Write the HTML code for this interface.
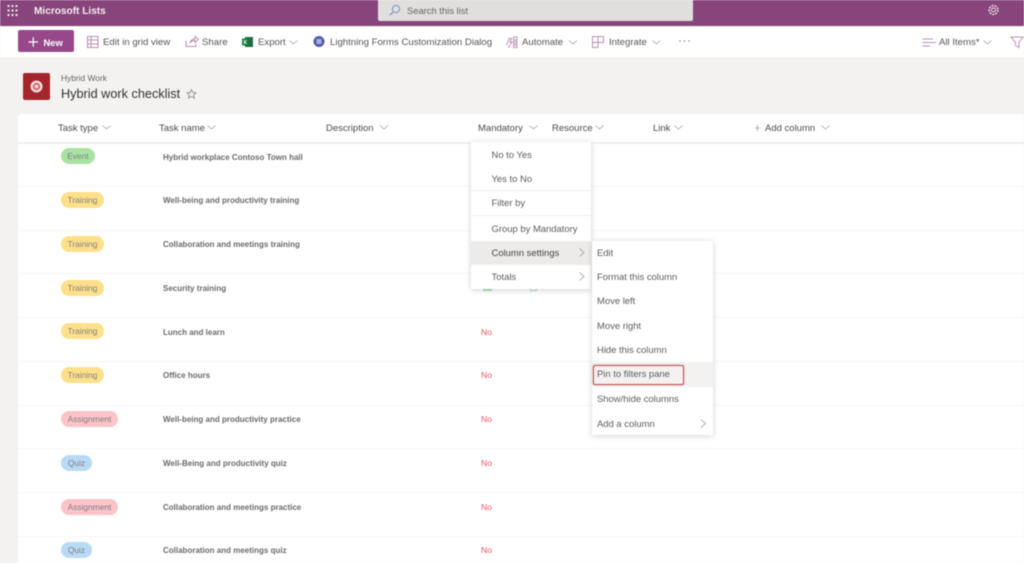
<!DOCTYPE html>
<html><head><meta charset="utf-8">
<style>
html,body{margin:0;padding:0;background:#f3f2f1}
#p{position:relative;width:1024px;height:563px;overflow:hidden;background:#f3f2f1;font-family:"Liberation Sans",sans-serif;color:#444;filter:blur(.4px)}
#p div,#p span.t,#p svg{position:absolute}
.t{position:absolute;white-space:nowrap;line-height:20px;height:20px;font-size:9.6px}
.c{font-size:9.6px;color:#555}
.h{font-size:9.5px;color:#4a4a4a}
.m{font-size:9.45px;color:#5c5c5c}
.n{font-size:8px;font-weight:bold;color:#6a6a6a}
.r{font-size:8.6px;color:#f0525f}
.pill{height:16px;border-radius:8px;line-height:16px;font-size:8.4px;color:#808080;text-align:center}
.sep{left:18px;width:1006px;height:1px;background:#f7f6f5}
.ms{left:471px;width:120px;height:1px;background:#f0efee}
svg{overflow:visible}
</style></head><body><div id="p">
<!-- top bar -->
<div style="left:0;top:0;width:1024px;height:26px;background:#88457b"></div>
<div style="left:378px;top:0;width:315px;height:21px;background:#e1dfdd;border-radius:0 0 2px 2px"></div>
<svg style="left:0;top:0" width="1024" height="26">
<g fill="#f0e4ee"><rect x="7.500" y="5" width="2" height="2"/><rect x="11.500" y="5" width="2" height="2"/><rect x="15.500" y="5" width="2" height="2"/><rect x="7.500" y="9.500" width="2" height="2"/><rect x="11.500" y="9.500" width="2" height="2"/><rect x="15.500" y="9.500" width="2" height="2"/><rect x="7.500" y="14" width="2" height="2"/><rect x="11.500" y="14" width="2" height="2"/><rect x="15.500" y="14" width="2" height="2"/></g>
<circle cx="396" cy="9" r="3.600" fill="none" stroke="#6b93c9" stroke-width="1"/><path d="M393.400 11.800L389.600 15.400" stroke="#6b93c9" stroke-width="1.100"/>
<circle cx="993.500" cy="10" r="2" fill="none" stroke="#eadfe8" stroke-width="1"/><circle cx="993.500" cy="10" r="4.400" fill="none" stroke="#eadfe8" stroke-width="1.600" stroke-dasharray="1.900 1.200"/>
</svg>
<span class="t" style="left:34px;top:2px;color:#fff;font-size:10.100px;font-weight:bold;opacity:.9">Microsoft Lists</span>
<span class="t" style="left:407px;top:1px;color:#666;font-size:9.400px">Search this list</span>
<!-- command bar -->
<div style="left:0;top:27px;width:1024px;height:30px;background:#fff"></div>
<div style="left:18px;top:30px;width:56px;height:22px;background:#97488a;border-radius:2px"></div>
<svg style="left:0;top:27px" width="1024" height="30" fill="none" stroke="#bb8fb3" stroke-width="1">
<path d="M28.500 15H38M33.200 10.200V19.800" stroke="#fff" stroke-width="1.200"/>
<path d="M87.500 9.500H98V20.500H87.500ZM87.500 13H98M87.500 17H98M91 9.500V20.500"/>
<path d="M186 13.500V19.500H196V17M190 16C190.500 13 192.500 12 195 12V9.500L198.500 12.500L195 15.500V13.500C193 13.500 191.500 14 190 16Z"/>
<rect x="245" y="10" width="8" height="10" fill="#1d6f42" stroke="none"/><rect x="242" y="11.500" width="6" height="7" fill="#107c41" stroke="none"/><path d="M243.500 13L246.500 17M246.500 13L243.500 17" stroke="#fff" stroke-width=".8"/>
<circle cx="319" cy="14.500" r="5.500" fill="#5558af" stroke="none"/><rect x="316.500" y="12" width="5" height="5" fill="#aab0e0" stroke="none"/>
<path d="M506.500 18L509 11.500H511.500L510 15H512L508 20.500M513.500 10h3.500v3h-3.500zM513.500 14.500h3.500v2h-3.500zM513.500 18h3.500v2.500h-3.500z"/>
<path d="M592.500 9.500H603.500V15.500H598V20.500H592.500ZM592.500 15.500H598M598 9.500V15.500"/>
<path d="M922.500 12H933M922.500 15.500H936M922.500 19H930"/>
<path d="M1011 10H1023L1019 15.500V20.500L1015.500 18.500V15.500Z"/>
<g stroke="#a0a0a0" stroke-width=".8"><path d="M289.500 13.500L293.500 17L297.500 13.500"/><path d="M569 13.500L573 17L577 13.500"/><path d="M652.500 13.500L656.500 17L660.500 13.500"/><path d="M983.500 13.500L987.500 17L991.500 13.500"/></g>
<g fill="#888" stroke="none"><circle cx="680" cy="14" r=".8"/><circle cx="684.500" cy="14" r=".8"/><circle cx="689" cy="14" r=".8"/></g>
</svg>
<span class="t" style="left:43.500px;top:33px;color:#fff;font-size:9.400px;font-weight:bold">New</span>
<span class="t c" style="left:103px;top:33px">Edit in grid view</span>
<span class="t c" style="left:202px;top:33px">Share</span>
<span class="t c" style="left:258px;top:33px">Export</span>
<span class="t c" style="left:330px;top:33px">Lightning Forms Customization Dialog</span>
<span class="t c" style="left:522px;top:33px">Automate</span>
<span class="t c" style="left:609px;top:33px">Integrate</span>
<span class="t c" style="left:939px;top:33px">All Items*</span>
<!-- title -->
<div style="left:23px;top:73px;width:27px;height:27px;background:#a4262c;border-radius:2px"></div>
<svg style="left:23px;top:73px" width="27" height="27"><circle cx="13.500" cy="13.500" r="6" fill="#f4dcdc"/><circle cx="13.500" cy="13.500" r="3.600" fill="#c9555a"/><circle cx="13.500" cy="13.500" r="2" fill="#f4dcdc"/></svg>
<span class="t" style="left:61px;top:68px;font-size:8.400px;color:#666">Hybrid Work</span>
<span class="t" style="left:61px;top:84px;font-size:12.700px;color:#333">Hybrid work checklist</span>
<svg style="left:186px;top:87.500px" width="12" height="12"><path d="M5.500 1.500L6.800 4.500L10 4.800L7.600 7L8.400 10.200L5.500 8.500L2.600 10.200L3.400 7L1 4.800L4.200 4.500Z" fill="none" stroke="#777" stroke-width=".7"/></svg>
<!-- list -->
<div style="left:18px;top:114px;width:1006px;height:449px;background:#fff;border-radius:3px 0 0 0"></div>
<div style="left:18px;top:142px;width:1006px;height:2px;background:#f0efee"></div>
<div class="sep" style="top:186px"></div><div class="sep" style="top:230px"></div><div class="sep" style="top:273px"></div><div class="sep" style="top:317px"></div><div class="sep" style="top:361px"></div><div class="sep" style="top:405px"></div><div class="sep" style="top:448px"></div><div class="sep" style="top:492px"></div><div class="sep" style="top:536px"></div>
<span class="t h" style="left:58px;top:119px">Task type</span>
<span class="t h" style="left:159px;top:119px">Task name</span>
<span class="t h" style="left:326px;top:119px">Description</span>
<span class="t h" style="left:478px;top:119px">Mandatory</span>
<span class="t h" style="left:552px;top:119px">Resource</span>
<span class="t h" style="left:653px;top:119px">Link</span>
<span class="t h" style="left:765px;top:119px">Add column</span>
<svg style="left:0;top:114px" width="1024" height="28" fill="none" stroke="#a0a0a0" stroke-width=".8">
<path d="M102.500 11.500L106.500 15L110.500 11.500M207.500 11.500L211.500 15L215.500 11.500M380 11.500L384 15L388 11.500M529.500 11.500L533.500 15L537.500 11.500M595.500 11.500L599.500 15L603.500 11.500M674.500 11.500L678.500 15L682.500 11.500M821.500 11.500L825.500 15L829.500 11.500"/>
<path d="M754.500 14H760.500M757.500 11V17"/>
</svg>
<!-- pills -->
<div class="pill" style="left:61px;top:148px;width:34px;background:#a8e3a3">Event</div>
<div class="pill" style="left:61px;top:192px;width:43px;background:#ffe08a">Training</div>
<div class="pill" style="left:61px;top:236px;width:43px;background:#ffe08a">Training</div>
<div class="pill" style="left:61px;top:280px;width:43px;background:#ffe08a">Training</div>
<div class="pill" style="left:61px;top:323px;width:43px;background:#ffe08a">Training</div>
<div class="pill" style="left:61px;top:367px;width:43px;background:#ffe08a">Training</div>
<div class="pill" style="left:61px;top:411px;width:57px;background:#fbc4c9">Assignment</div>
<div class="pill" style="left:61px;top:455px;width:31px;background:#b9daf5">Quiz</div>
<div class="pill" style="left:61px;top:499px;width:57px;background:#fbc4c9">Assignment</div>
<div class="pill" style="left:61px;top:542px;width:31px;background:#b9daf5">Quiz</div>
<!-- names -->
<span class="t n" style="left:163px;top:148px">Hybrid workplace Contoso Town hall</span>
<span class="t n" style="left:163px;top:191px">Well-being and productivity training</span>
<span class="t n" style="left:163px;top:235px">Collaboration and meetings training</span>
<span class="t n" style="left:163px;top:279px">Security training</span>
<span class="t n" style="left:163px;top:323px">Lunch and learn</span>
<span class="t n" style="left:163px;top:366px">Office hours</span>
<span class="t n" style="left:163px;top:410px">Well-being and productivity practice</span>
<span class="t n" style="left:163px;top:454px">Well-Being and productivity quiz</span>
<span class="t n" style="left:163px;top:498px">Collaboration and meetings practice</span>
<span class="t n" style="left:163px;top:541px">Collaboration and meetings quiz</span>
<!-- No -->
<span class="t r" style="left:481px;top:322px">No</span>
<span class="t r" style="left:481px;top:365px">No</span>
<span class="t r" style="left:481px;top:409px">No</span>
<span class="t r" style="left:481px;top:453px">No</span>
<span class="t r" style="left:481px;top:497px">No</span>
<span class="t r" style="left:481px;top:540px">No</span>
<div style="left:483px;top:289px;width:9px;height:1.500px;background:#b5dcb5"></div>
<div style="left:530px;top:288px;width:5px;height:2px;border:1px solid #b5dcb5;border-top:0"></div>
<!-- menu 1 -->
<div style="left:471px;top:142px;width:120px;height:147px;background:#fff;box-shadow:0 1px 6px rgba(0,0,0,.18)"></div>
<div class="ms" style="top:190px"></div><div class="ms" style="top:215px"></div>
<div style="left:471px;top:241px;width:120px;height:24px;background:#edebe9"></div>
<span class="t m" style="left:491.500px;top:146px">No to Yes</span>
<span class="t m" style="left:491.500px;top:170px">Yes to No</span>
<span class="t m" style="left:491.500px;top:194px">Filter by</span>
<span class="t m" style="left:491.500px;top:220px">Group by Mandatory</span>
<span class="t m" style="left:491.500px;top:244px;color:#444">Column settings</span>
<span class="t m" style="left:491.500px;top:268px">Totals</span>
<!-- menu 2 -->
<div style="left:592px;top:241px;width:121px;height:194px;background:#fff;box-shadow:0 1px 6px rgba(0,0,0,.18)"></div>
<div style="left:592px;top:362px;width:121px;height:25px;background:#f3f2f1"></div>
<div style="left:593px;top:365px;width:89px;height:17.500px;border:1.300px solid #c8484d;border-radius:2px;box-shadow:0 0 2px rgba(0,0,0,.25)"></div>
<span class="t m" style="left:597px;top:244px">Edit</span>
<span class="t m" style="left:597px;top:268px">Format this column</span>
<span class="t m" style="left:597px;top:292px">Move left</span>
<span class="t m" style="left:597px;top:317px">Move right</span>
<span class="t m" style="left:597px;top:341px">Hide this column</span>
<span class="t m" style="left:597px;top:365px">Pin to filters pane</span>
<span class="t m" style="left:597px;top:390px">Show/hide columns</span>
<span class="t m" style="left:597px;top:415px">Add a column</span>
<svg style="left:0;top:0" width="1024" height="563" fill="none" stroke="#999" stroke-width=".8">
<path d="M579.500 248.500L584 252.500L579.500 256.500M579.500 272.500L584 276.500L579.500 280.500M701 419.500L705.500 423.500L701 427.500"/>
</svg>
</div></body></html>
